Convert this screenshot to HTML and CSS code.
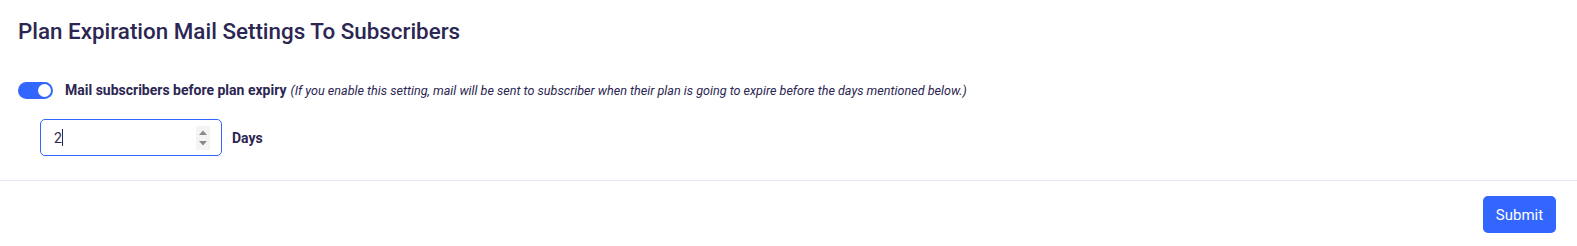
FILE: index.html
```html
<!DOCTYPE html>
<html>
<head>
<meta charset="utf-8">
<link rel="stylesheet" href="styles.css">
</head>
<body>
<div class="card">
  <div class="card-body">
    <h2 class="title">Plan Expiration Mail Settings To Subscribers</h2>
    <div class="setting-row">
      <span class="toggle"><span class="knob"></span></span>
      <span class="label">Mail subscribers before plan expiry</span>
      <span class="hint">(If you enable this setting, mail will be sent to subscriber when their plan is going to expire before the days mentioned below.)</span>
    </div>
    <div class="days-row">
      <div class="input-box">
        <span class="value">2<span class="caret"></span></span>
        <span class="spinner">
          <svg width="14" height="24" viewBox="0 0 14 24">
            <rect x="0" y="0" width="14" height="24" fill="#f4f4f6"/>
            <path d="M3 9 L7 4.5 L11 9 Z" fill="#8a8a8a"/>
            <path d="M3 15 L7 19.5 L11 15 Z" fill="#8a8a8a"/>
          </svg>
        </span>
      </div>
      <span class="days">Days</span>
    </div>
  </div>
  <div class="card-footer">
    <button class="btn">Submit</button>
  </div>
</div>
</body>
</html>
```
FILE: styles.css
```css
* { box-sizing: border-box; }
html, body { margin: 0; padding: 0; background: #fff; }
body { font-family: Roboto, "Liberation Sans", sans-serif; color: #2b2652; }
.card { width: 100%; }
.card-body { padding: 18px 18px 24px 18px; border-bottom: 1px solid #e8e6f0; }
.title { margin: 0; font-size: 22.4px; font-weight: 500; line-height: 26px; color: #2b2652; }
.setting-row { display: flex; align-items: center; margin-top: 36px; height: 20px; }
.toggle { width: 35px; height: 17px; border-radius: 9px; background: #3366ff; display: flex; align-items: center; justify-content: flex-end; padding-right: 2px; margin-right: 12px; }
.knob { width: 13px; height: 13px; border-radius: 50%; background: #fff; }
.label { font-size: 14px; font-weight: 700; margin-right: 4px; }
.hint { font-size: 12.6px; font-style: italic; color: #2b2652; }
.days-row { display: flex; align-items: center; margin-top: 19px; padding-left: 22px; }
.input-box { width: 182px; height: 37px; border: 1px solid #3366ff; border-radius: 5px; display: flex; align-items: center; justify-content: space-between; padding: 0 11px 0 13px; }
.value { font-size: 14px; color: #2b2652; display: flex; align-items: center; }
.caret { display: inline-block; width: 1px; height: 17px; background: #2b2652; margin-left: 0px; }
.spinner { display: flex; }
.spinner svg { display: block; }
.days { font-size: 14px; font-weight: 700; margin-left: 10px; }
.card-footer { display: flex; justify-content: flex-end; padding: 15px 21px 0 0; }
.btn { width: 73px; height: 37px; border: none; border-radius: 5px; background: #3366ff; color: #fff; font-family: Roboto, "Liberation Sans", sans-serif; font-size: 15px; font-weight: 400; cursor: pointer; }
```
